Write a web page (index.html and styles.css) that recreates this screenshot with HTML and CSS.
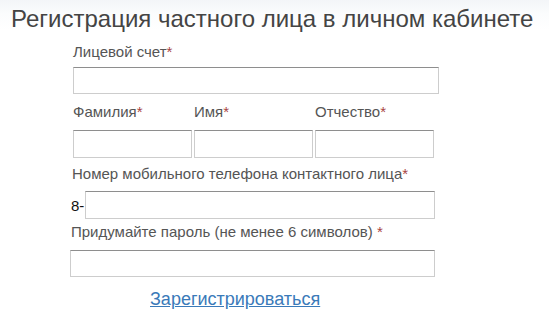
FILE: index.html
```html
<!DOCTYPE html>
<html lang="ru">
<head>
<meta charset="utf-8">
<title>Регистрация</title>
<link rel="stylesheet" href="styles.css">
</head>
<body>
<div class="page">
  <h1 class="title">Регистрация частного лица в личном кабинете</h1>
  <form class="form">
    <label class="label label-account">Лицевой счет<span class="req">*</span></label>
    <input class="field field-account" type="text">

    <div class="name-row">
      <div class="name-col">
        <label class="label">Фамилия<span class="req">*</span></label>
        <input class="field field-name" type="text">
      </div>
      <div class="name-col">
        <label class="label">Имя<span class="req">*</span></label>
        <input class="field field-name" type="text">
      </div>
      <div class="name-col">
        <label class="label">Отчество<span class="req">*</span></label>
        <input class="field field-name" type="text">
      </div>
    </div>

    <label class="label label-phone">Номер мобильного телефона контактного лица<span class="req">*</span></label>
    <div class="phone-row">
      <span class="prefix">8-</span>
      <input class="field field-phone" type="text">
    </div>

    <label class="label label-pass">Придумайте пароль (не менее 6 символов) <span class="req">*</span></label>
    <input class="field field-pass" type="password">

    <a class="submit" href="#">Зарегистрироваться</a>
  </form>
</div>
</body>
</html>
```

FILE: styles.css
```css
html, body {
  margin: 0;
  padding: 0;
  background: #fff;
}

.page {
  width: 549px;
  height: 316px;
  overflow: hidden;
  font-family: "Liberation Sans", Arial, sans-serif;
  background: linear-gradient(to bottom, #f3f5f8 0px, #fbfcfd 14px, #ffffff 30px);
}

.title {
  margin: 0;
  padding: 5px 0 0 11px;
  font-size: 24px;
  line-height: 28px;
  font-weight: normal;
  color: #444;
  white-space: nowrap;
}

.form {
  display: flex;
  flex-direction: column;
  align-items: flex-start;
  padding-left: 73px;
}

.label {
  display: block;
  font-size: 15px;
  line-height: 17px;
  color: #555;
  white-space: nowrap;
}

.req {
  color: #a94442;
}

.label-account {
  margin-top: 10px;
}

.field {
  display: block;
  box-sizing: border-box;
  margin: 0;
  padding: 0 4px;
  border: 1px solid #cdcdcd;
  border-top-color: #8e8e8e;
  background: #fff;
  font-family: "Liberation Sans", Arial, sans-serif;
  font-size: 14px;
  outline: none;
}

.field-account {
  margin-top: 7px;
  width: 366px;
  height: 27px;
}

.name-row {
  display: flex;
  gap: 2px;
  margin-top: 9px;
}

.name-col {
  display: flex;
  flex-direction: column;
  gap: 10px;
}

.field-name {
  width: 119px;
  height: 28px;
}

.label-phone {
  margin-top: 7px;
  margin-left: -1px;
}

.phone-row {
  display: flex;
  align-items: center;
  margin-top: 9px;
  margin-left: -2px;
}

.prefix {
  font-size: 15px;
  line-height: 17px;
  color: #111;
  margin-right: 1px;
}

.field-phone {
  width: 350px;
  height: 28px;
}

.label-pass {
  margin-top: 4px;
  margin-left: -2px;
}

.field-pass {
  margin-top: 10px;
  margin-left: -3px;
  width: 365px;
  height: 27px;
}

.submit {
  display: block;
  margin-top: 12px;
  margin-left: 77px;
  font-size: 18px;
  line-height: 20px;
  color: #3a7ab9;
  text-decoration: underline;
}
```
